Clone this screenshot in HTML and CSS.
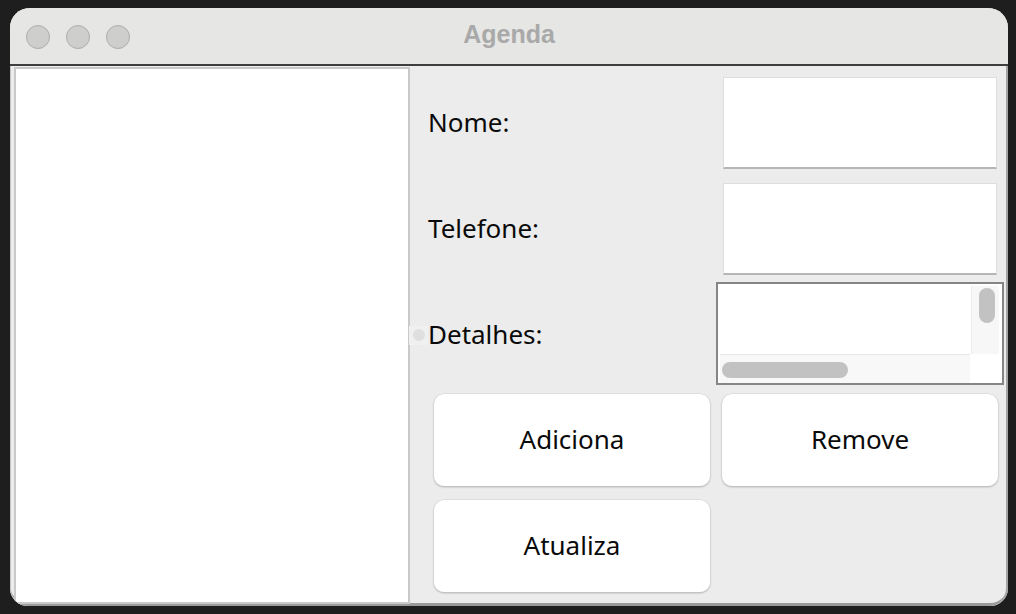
FILE: index.html
```html
<!DOCTYPE html>
<html lang="pt">
<head>
<meta charset="utf-8">
<title>Agenda</title>
<link rel="stylesheet" href="styles.css">
</head>
<body>
<div class="window">
  <div class="titlebar">
    <div class="lights">
      <span class="light"></span>
      <span class="light"></span>
      <span class="light"></span>
    </div>
    <div class="title">Agenda</div>
    <div></div>
  </div>
  <div class="content">
    <div class="list"></div>
    <div class="form">
      <div class="label">Nome:</div>
      <div class="cell"><div class="field"></div></div>
      <div class="label">Telefone:</div>
      <div class="cell"><div class="field"></div></div>
      <div class="label"><span class="dotbox"><span class="dot"></span></span>Detalhes:</div>
      <div class="cell">
        <div class="scrollarea">
          <div class="sa-main">
            <div class="sa-text"></div>
            <div class="vbar"><div class="vthumb"></div></div>
          </div>
          <div class="sa-bottom">
            <div class="hbar"><div class="hthumb"></div></div>
            <div class="corner"></div>
          </div>
        </div>
      </div>
      <div class="cell"><button class="btn">Adiciona</button></div>
      <div class="cell"><button class="btn">Remove</button></div>
      <div class="cell"><button class="btn">Atualiza</button></div>
      <div class="cell"></div>
    </div>
  </div>
</div>
</body>
</html>
```
FILE: styles.css
```css
html, body {
  margin: 0;
  padding: 0;
  background: #1e1e1e;
  width: 1016px;
  height: 614px;
  overflow: hidden;
  font-family: "Noto Sans", "DejaVu Sans", sans-serif;
}

.window {
  margin: 8px 0 0 10px;
  width: 998px;
  height: 598px;
  border-radius: 20px 20px 18px 18px;
  overflow: hidden;
  background: #ececec;
  display: flex;
  flex-direction: column;
  box-sizing: border-box;
  box-shadow: inset 1px 0 0 #c4c4c4, inset -2px 0 0 #a4a4a4, inset 0 -3px 0 #9a9a9a;
}

.titlebar {
  height: 56px;
  flex: none;
  background: #e6e6e5;
  border-bottom: 2px solid #3e3e3e;
  display: grid;
  grid-template-columns: 1fr auto 1fr;
  align-items: center;
}

.lights {
  display: flex;
  gap: 16px;
  padding-left: 16px;
  padding-top: 1px;
}

.light {
  width: 22px;
  height: 22px;
  border-radius: 50%;
  background: #cececd;
  border: 1px solid #adadad;
}

.title {
  font-family: "Liberation Sans", Arial, sans-serif;
  font-weight: bold;
  font-size: 25px;
  color: #a9a9a9;
  padding-bottom: 3px;
}

.content {
  flex: 1;
  display: flex;
  min-height: 0;
}

.list {
  width: 396px;
  box-sizing: border-box;
  margin: 1px 0 2px 4px;
  background: #fff;
  border: 2px solid #c9c9c9;
  border-right-width: 2px;
  flex: none;
}

.form {
  display: grid;
  grid-template-columns: 288px 288px;
  grid-template-rows: repeat(5, 106px);
  padding: 5px 0 0 18px;
}

.label {
  display: flex;
  align-items: center;
  font-size: 26px;
  color: #0a0a0a;
  padding-bottom: 4px;
  white-space: nowrap;
}

.dotbox {
  width: 19px;
  height: 19px;
  margin-left: -19px;
  background: #f0f0f0;
  display: flex;
  align-items: center;
  justify-content: center;
  margin-top: 2px;
}

.dot {
  width: 12px;
  height: 12px;
  border-radius: 50%;
  background: #dfdfdf;
}

.cell {
  display: flex;
}

.field {
  margin: 6px 7px 8px 7px;
  flex: 1;
  background: #fff;
  border: 1px solid #dedede;
  border-bottom: 2px solid #b6b6b6;
}

.scrollarea {
  margin: -1px 0 4px 0;
  flex: 1;
  border: 2px solid #858585;
  background: #fff;
  padding: 2px 3px 0 2px;
  display: flex;
  flex-direction: column;
}

.sa-main {
  flex: 1;
  display: flex;
}

.sa-text {
  flex: 1;
}

.vbar {
  width: 28px;
  background: #f7f7f7;
  border-left: 1px solid #ececec;
  padding: 2px 0 0 7px;
  box-sizing: border-box;
}

.vthumb {
  width: 16px;
  height: 35px;
  border-radius: 8px;
  background: #c2c2c2;
}

.sa-bottom {
  height: 29px;
  display: flex;
}

.hbar {
  flex: 1;
  background: #f8f8f8;
  border-top: 1px solid #e8e8e8;
  padding: 7px 0 0 2px;
}

.hthumb {
  width: 126px;
  height: 16px;
  border-radius: 8px;
  background: #c2c2c2;
}

.corner {
  width: 29px;
  background: #fff;
}

.btn {
  margin: 5px 6px 9px 6px;
  flex: 1;
  background: #fff;
  border: none;
  border-radius: 10px;
  box-shadow: 0 0 0 0.5px #d4d4d4, 0 1px 2px rgba(0, 0, 0, 0.35);
  font-family: "Noto Sans", "DejaVu Sans", sans-serif;
  font-size: 26px;
  color: #0a0a0a;
  padding: 0 0 2px 0;
}
```
